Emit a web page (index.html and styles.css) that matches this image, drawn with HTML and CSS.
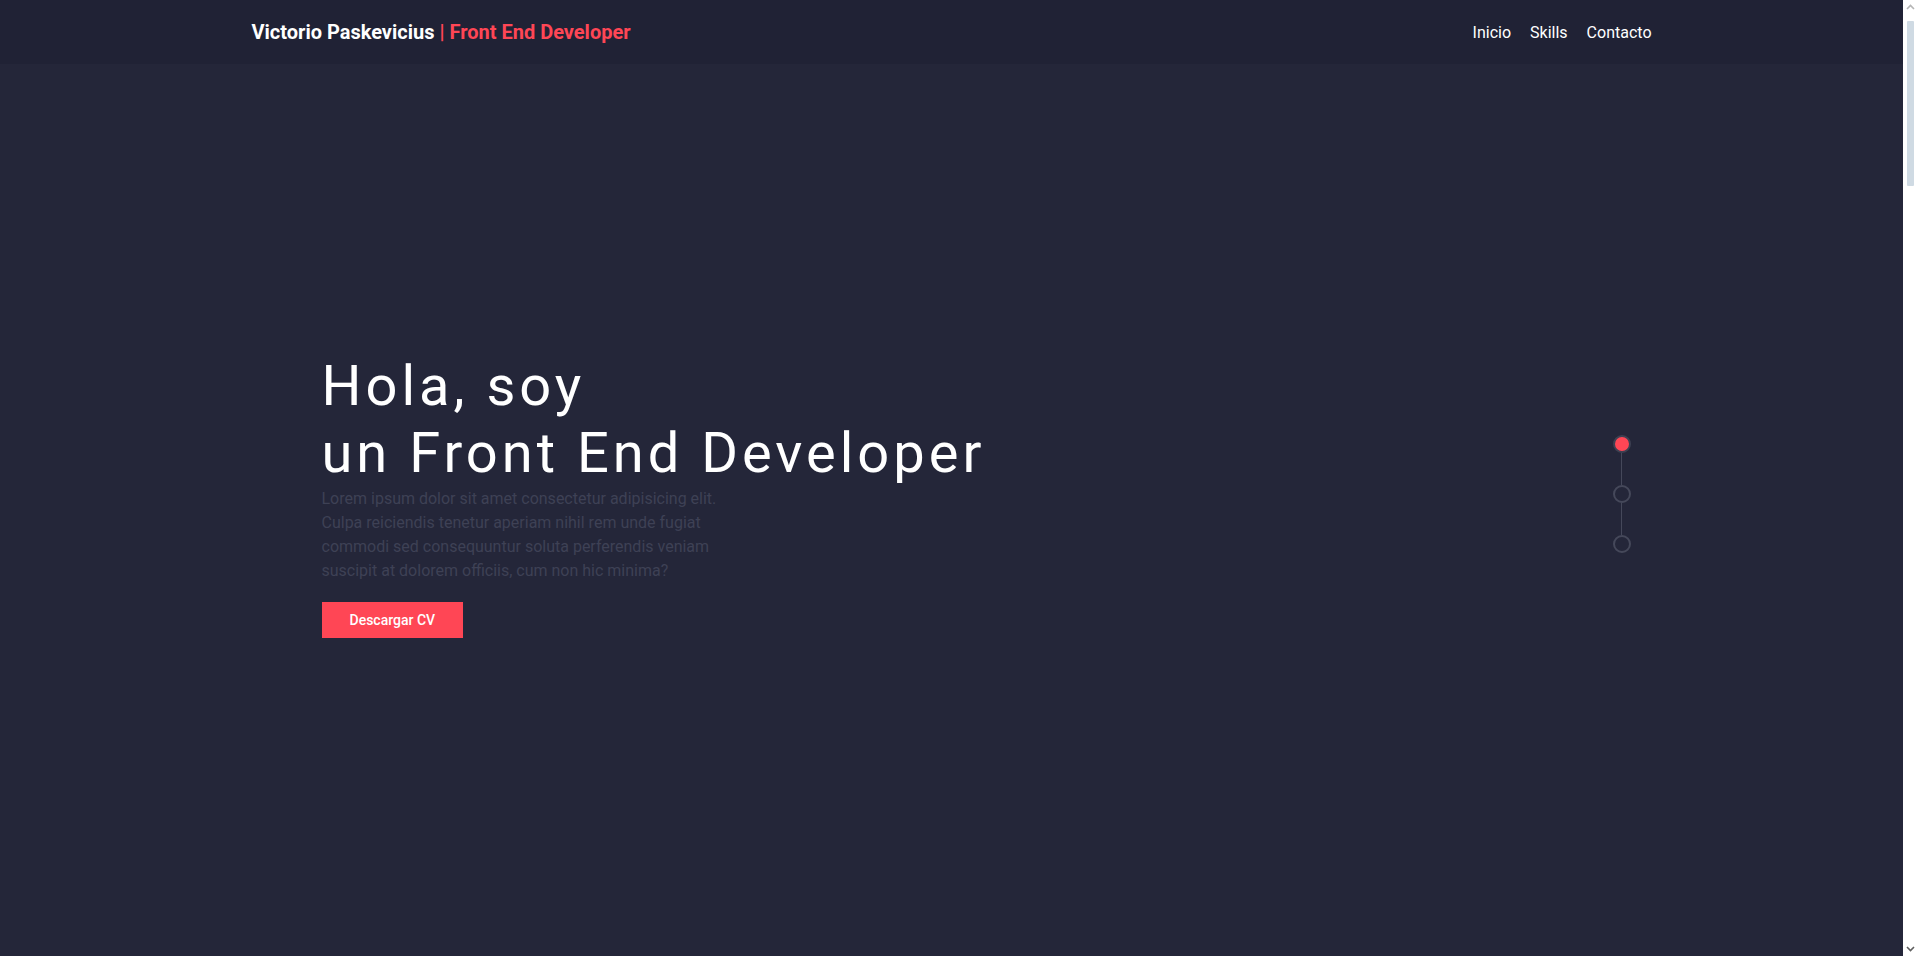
FILE: index.html
```html
<!DOCTYPE html>
<html lang="es">
<head>
<meta charset="utf-8">
<title>Victorio Paskevicius | Front End Developer</title>
<link rel="stylesheet" href="styles.css">
</head>
<body>
<header class="header">
  <div class="container header-inner">
    <a class="brand" href="#inicio">Victorio Paskevicius <span class="brand-accent">| Front End Developer</span></a>
    <nav class="nav">
      <a href="#inicio">Inicio</a>
      <a href="#skills">Skills</a>
      <a href="#contacto">Contacto</a>
    </nav>
  </div>
</header>
<main>
  <section class="hero" id="inicio">
    <div class="container hero-inner">
      <div class="hero-text">
        <h1 class="hero-title">Hola, soy<br>un Front End Developer</h1>
        <p class="hero-desc">Lorem ipsum dolor sit amet consectetur adipisicing elit. Culpa reiciendis tenetur aperiam nihil rem unde fugiat commodi sed consequuntur soluta perferendis veniam suscipit at dolorem officiis, cum non hic minima?</p>
        <a class="btn" href="#">Descargar CV</a>
      </div>
      <ul class="dots">
        <li class="dot dot-active"></li>
        <li class="dot-line"></li>
        <li class="dot"></li>
        <li class="dot-line"></li>
        <li class="dot"></li>
      </ul>
    </div>
  </section>
  <section class="section" id="skills"></section>
  <section class="section" id="contacto"></section>
</main>
<div class="fake-scrollbar" aria-hidden="true">
  <svg class="sb-arrow sb-up" width="9" height="6" viewBox="0 0 9 6"><path d="M1 5 L4.5 1.5 L8 5" fill="none" stroke="#b5b5b5" stroke-width="1.6"/></svg>
  <div class="sb-track"><div class="sb-thumb"></div></div>
  <svg class="sb-arrow sb-down" width="9" height="6" viewBox="0 0 9 6"><path d="M1 1 L4.5 4.5 L8 1" fill="none" stroke="#5f5f5f" stroke-width="1.6"/></svg>
</div>
</body>
</html>
```

FILE: styles.css
```css
html {
  background: #242639;
}
body {
  margin: 0;
  padding-right: 15px;
  font-family: Roboto, "Liberation Sans", Arial, sans-serif;
  background: #242639;
  color: #ffffff;
}
::-webkit-scrollbar {
  width: 0;
}
a {
  text-decoration: none;
  color: inherit;
}
.container {
  width: 1400px;
  margin: 0 auto;
}
.header {
  background: #202235;
  height: 64px;
}
.header-inner {
  height: 100%;
  display: flex;
  align-items: center;
  justify-content: space-between;
}
.brand {
  font-size: 20px;
  font-weight: 700;
  color: #ffffff;
}
.brand-accent {
  color: #ff4655;
}
.nav {
  display: flex;
  gap: 19px;
  font-size: 16px;
}
.nav a {
  color: #ffffff;
}
.hero {
  height: 892px;
  box-sizing: border-box;
  padding-bottom: 32px;
  display: flex;
  align-items: center;
}
.hero-inner {
  box-sizing: border-box;
  padding: 0 21px 0 70px;
  display: flex;
  align-items: center;
  justify-content: space-between;
}
.hero-title {
  margin: 3px 0 0;
  font-size: 56px;
  font-weight: 400;
  line-height: 1.2;
  letter-spacing: 4px;
  color: #ffffff;
}
.hero-desc {
  margin: 0 0 19px;
  max-width: 400px;
  font-size: 16px;
  line-height: 24px;
  color: #3e4155;
}
.btn {
  display: inline-block;
  padding: 10px 28px;
  background: #ff4655;
  color: #ffffff;
  font-size: 14px;
  font-weight: 500;
  line-height: 16px;
}
.dots {
  list-style: none;
  margin: 0;
  padding: 0;
  display: flex;
  flex-direction: column;
  align-items: center;
}
.dot {
  width: 14px;
  height: 14px;
  border: 2px solid #45485a;
  border-radius: 50%;
}
.dot-active {
  background: #ff4655;
  border-color: #3d4052;
}
.dot-line {
  width: 1px;
  height: 32px;
  background: #45485a;
}
.section {
  height: 2192px;
}
.fake-scrollbar {
  position: fixed;
  top: 0;
  right: 0;
  width: 15px;
  height: 100vh;
  background: #ffffff;
  display: flex;
  flex-direction: column;
  align-items: center;
}
.sb-arrow {
  flex: none;
  margin: 4px 0;
}
.sb-track {
  flex: 1;
  width: 100%;
  padding: 7px 0 0 4px;
  box-sizing: border-box;
}
.sb-thumb {
  width: 7px;
  height: 165px;
  background: #cfdae3;
  border-radius: 1px;
}
```
